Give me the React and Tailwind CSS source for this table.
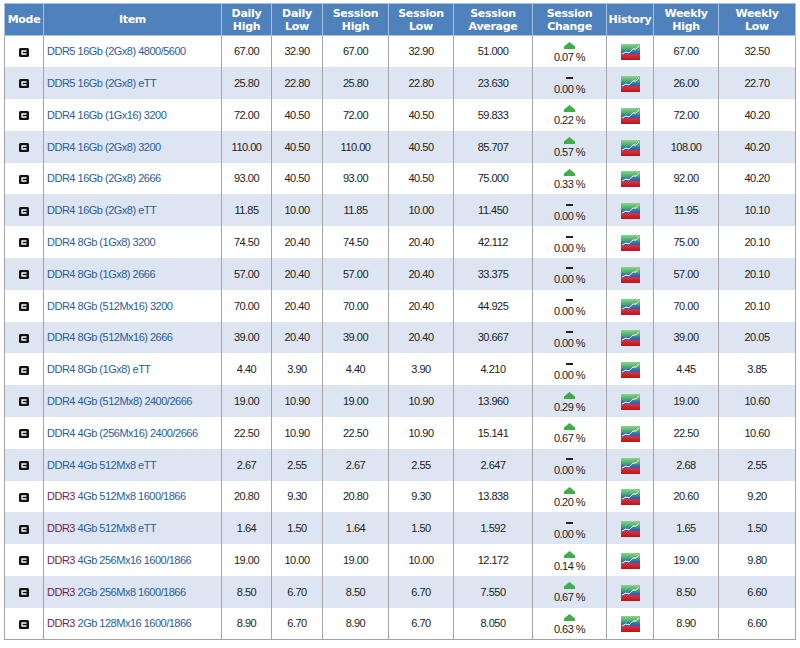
import React from "react";

const rows = [
  ["DDR5", "16Gb (2Gx8) 4800/5600", "67.00", "32.90", "67.00", "32.90", "51.000", "up", "0.07 %", "67.00", "32.50"],
  ["DDR5", "16Gb (2Gx8) eTT", "25.80", "22.80", "25.80", "22.80", "23.630", "flat", "0.00 %", "26.00", "22.70"],
  ["DDR4", "16Gb (1Gx16) 3200", "72.00", "40.50", "72.00", "40.50", "59.833", "up", "0.22 %", "72.00", "40.20"],
  ["DDR4", "16Gb (2Gx8) 3200", "110.00", "40.50", "110.00", "40.50", "85.707", "up", "0.57 %", "108.00", "40.20"],
  ["DDR4", "16Gb (2Gx8) 2666", "93.00", "40.50", "93.00", "40.50", "75.000", "up", "0.33 %", "92.00", "40.20"],
  ["DDR4", "16Gb (2Gx8) eTT", "11.85", "10.00", "11.85", "10.00", "11.450", "flat", "0.00 %", "11.95", "10.10"],
  ["DDR4", "8Gb (1Gx8) 3200", "74.50", "20.40", "74.50", "20.40", "42.112", "flat", "0.00 %", "75.00", "20.10"],
  ["DDR4", "8Gb (1Gx8) 2666", "57.00", "20.40", "57.00", "20.40", "33.375", "flat", "0.00 %", "57.00", "20.10"],
  ["DDR4", "8Gb (512Mx16) 3200", "70.00", "20.40", "70.00", "20.40", "44.925", "flat", "0.00 %", "70.00", "20.10"],
  ["DDR4", "8Gb (512Mx16) 2666", "39.00", "20.40", "39.00", "20.40", "30.667", "flat", "0.00 %", "39.00", "20.05"],
  ["DDR4", "8Gb (1Gx8) eTT", "4.40", "3.90", "4.40", "3.90", "4.210", "flat", "0.00 %", "4.45", "3.85"],
  ["DDR4", "4Gb (512Mx8) 2400/2666", "19.00", "10.90", "19.00", "10.90", "13.960", "up", "0.29 %", "19.00", "10.60"],
  ["DDR4", "4Gb (256Mx16) 2400/2666", "22.50", "10.90", "22.50", "10.90", "15.141", "up", "0.67 %", "22.50", "10.60"],
  ["DDR4", "4Gb 512Mx8 eTT", "2.67", "2.55", "2.67", "2.55", "2.647", "flat", "0.00 %", "2.68", "2.55"],
  ["DDR3", "4Gb 512Mx8 1600/1866", "20.80", "9.30", "20.80", "9.30", "13.838", "up", "0.20 %", "20.60", "9.20"],
  ["DDR3", "4Gb 512Mx8 eTT", "1.64", "1.50", "1.64", "1.50", "1.592", "flat", "0.00 %", "1.65", "1.50"],
  ["DDR3", "4Gb 256Mx16 1600/1866", "19.00", "10.00", "19.00", "10.00", "12.172", "up", "0.14 %", "19.00", "9.80"],
  ["DDR3", "2Gb 256Mx8 1600/1866", "8.50", "6.70", "8.50", "6.70", "7.550", "up", "0.67 %", "8.50", "6.60"],
  ["DDR3", "2Gb 128Mx16 1600/1866", "8.90", "6.70", "8.90", "6.70", "8.050", "up", "0.63 %", "8.90", "6.60"],
];

const headers = [
  { label: ["Mode"], w: "w-[39px]" },
  { label: ["Item"], w: "w-[178px]" },
  { label: ["Daily", "High"], w: "w-[50px]" },
  { label: ["Daily", "Low"], w: "w-[51px]" },
  { label: ["Session", "High"], w: "w-[66px]" },
  { label: ["Session", "Low"], w: "w-[65px]" },
  { label: ["Session", "Average"], w: "w-[79px]" },
  { label: ["Session", "Change"], w: "w-[74px]" },
  { label: ["History"], w: "w-[47px]" },
  { label: ["Weekly", "High"], w: "w-[65px]" },
  { label: ["Weekly", "Low"], w: "w-[77px]" },
];

const ModeIcon = () => (
  <svg width="10" height="9" viewBox="0 0 10 9" className="inline-block">
    <rect x="0" y="0" width="10" height="9" rx="1.5" fill="#111" />
    <path d="M7.5 3 H3 V6 H7.5" fill="none" stroke="#fff" strokeWidth="1.3" />
  </svg>
);

const HistoryIcon = () => (
  <svg width="19" height="16" viewBox="0 0 19 16" className="inline-block">
    <defs>
      <linearGradient id="hg" x1="0" y1="0" x2="0" y2="1">
        <stop offset="0" stopColor="#8fd48a" />
        <stop offset="0.35" stopColor="#3fa86a" />
        <stop offset="0.45" stopColor="#3d6fc0" />
        <stop offset="0.62" stopColor="#2d58b0" />
        <stop offset="0.66" stopColor="#d8323a" />
        <stop offset="1" stopColor="#b8141c" />
      </linearGradient>
    </defs>
    <rect x="0" y="0" width="19" height="16" fill="url(#hg)" />
    <polyline points="1,10 5,8 8,9 12,5 15,5 18,2" fill="none" stroke="#fff" strokeWidth="1" />
  </svg>
);

const UpArrow = () => (
  <svg width="11" height="7" viewBox="0 0 11 7" className="block">
    <path d="M5.5 0 L11 4.5 V7 H0 V4.5 Z" fill="#3fae49" />
  </svg>
);

const Flat = () => <div className="w-[7px] h-[2px] bg-[#222] mt-[3px] mb-[2px]" />;

export default function App() {
  return (
    <div className="bg-white w-[800px] h-[648px] pt-[3px] pl-[4px]" style={{ fontFamily: "'Liberation Sans', Arial, sans-serif" }}>
      <table className="w-[791px] border-collapse table-fixed border border-[#a3a3a3]">
        <thead>
          <tr className="h-[32px] bg-[#4f81bd]">
            {headers.map((h, i) => (
              <th
                key={i}
                className={`${h.w} p-0 border border-[#a9bfdc] text-white font-bold text-[11px] leading-[13px] tracking-[-0.3px] text-center align-middle`}
                style={{ fontFamily: "'DejaVu Sans', Verdana, sans-serif" }}
              >
                {h.label.map((l, j) => (
                  <div key={j}>{l}</div>
                ))}
              </th>
            ))}
          </tr>
        </thead>
        <tbody>
          {rows.map((r, i) => (
            <tr key={i} className={`h-[31.8px] ${i % 2 === 1 ? "bg-[#dce5f1]" : "bg-white"}`}>
              <td className="p-0 text-center border-x border-[#a3a3a3]">
                <ModeIcon />
              </td>
              <td className="px-[3px] text-[11px] tracking-[-0.5px] text-[#2a5d9b] border-x border-[#a3a3a3] whitespace-nowrap">
                <span className={r[0] === "DDR3" ? "text-[#7c1d4d]" : ""}>{r[0]}</span> {r[1]}
              </td>
              {[2, 3, 4, 5, 6].map((k) => (
                <td key={k} className="p-0 text-center text-[11px] tracking-[-0.5px] text-[#222] border-x border-[#a3a3a3]">
                  {r[k]}
                </td>
              ))}
              <td className="p-0 border-x border-[#a3a3a3]">
                <div className="flex flex-col items-center text-[11px] tracking-[-0.5px] text-[#222] leading-[12px] pt-[2px]">
                  {r[7] === "up" ? <UpArrow /> : <Flat />}
                  <span className="mt-[2px]">{r[8]}</span>
                </div>
              </td>
              <td className="p-0 text-center border-x border-[#a3a3a3]">
                <HistoryIcon />
              </td>
              {[9, 10].map((k) => (
                <td key={k} className="p-0 text-center text-[11px] tracking-[-0.5px] text-[#222] border-x border-[#a3a3a3]">
                  {r[k]}
                </td>
              ))}
            </tr>
          ))}
        </tbody>
      </table>
    </div>
  );
}
